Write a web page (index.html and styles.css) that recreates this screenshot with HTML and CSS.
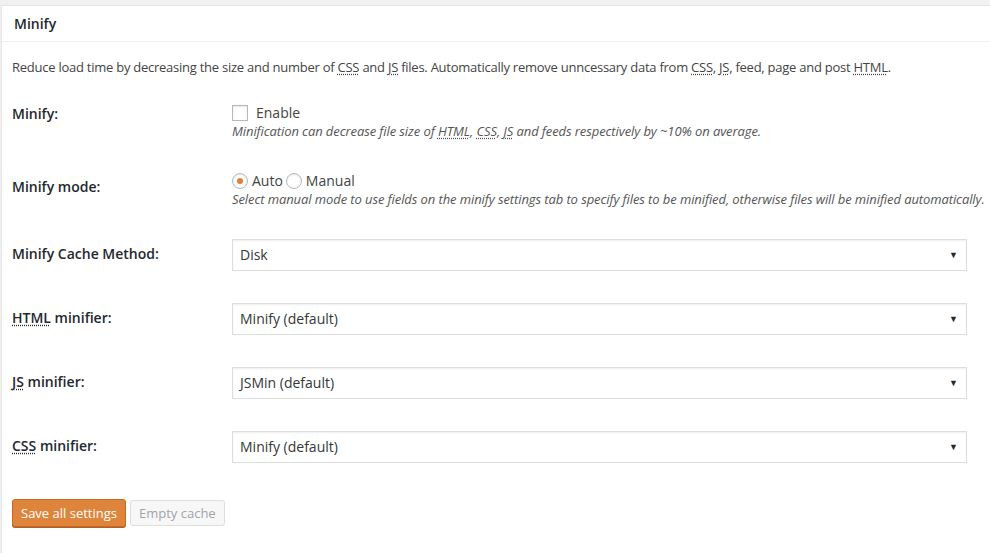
FILE: index.html
```html
<!DOCTYPE html>
<html>
<head>
<meta charset="utf-8">
<link rel="stylesheet" href="styles.css">
</head>
<body>
<div class="panel">
  <div class="panel-head">Minify</div>
  <div class="panel-body">
    <p class="intro">Reduce load time by decreasing the size and number of <abbr>CSS</abbr> and <abbr>JS</abbr> files. Automatically remove unncessary data from <abbr>CSS</abbr>, <abbr>JS</abbr>, feed, page and post <abbr>HTML</abbr>.</p>

    <div class="row row-enable">
      <div class="label">Minify:</div>
      <div class="field">
        <div class="line"><span class="checkbox"></span><span class="opt-text">Enable</span></div>
        <div class="desc">Minification can decrease file size of <abbr>HTML</abbr>, <abbr>CSS</abbr>, <abbr>JS</abbr> and feeds respectively by ~10% on average.</div>
      </div>
    </div>

    <div class="row row-mode">
      <div class="label label-low">Minify mode:</div>
      <div class="field">
        <div class="line"><span class="radio checked"></span><span class="radio-text">Auto</span><span class="radio"></span><span class="radio-text">Manual</span></div>
        <div class="desc">Select manual mode to use fields on the minify settings tab to specify files to be minified, otherwise files will be minified automatically.</div>
      </div>
    </div>

    <div class="row row-select">
      <div class="label label-sel">Minify Cache Method:</div>
      <div class="field"><div class="select"><span>Disk</span><span class="arrow">&#9660;</span></div></div>
    </div>

    <div class="row row-select">
      <div class="label label-sel"><abbr>HTML</abbr> minifier:</div>
      <div class="field"><div class="select"><span>Minify (default)</span><span class="arrow">&#9660;</span></div></div>
    </div>

    <div class="row row-select">
      <div class="label label-sel"><abbr>JS</abbr> minifier:</div>
      <div class="field"><div class="select"><span>JSMin (default)</span><span class="arrow">&#9660;</span></div></div>
    </div>

    <div class="row row-select">
      <div class="label label-sel"><abbr>CSS</abbr> minifier:</div>
      <div class="field"><div class="select"><span>Minify (default)</span><span class="arrow">&#9660;</span></div></div>
    </div>

    <div class="buttons">
      <button class="btn-primary">Save all settings</button>
      <button class="btn-disabled">Empty cache</button>
    </div>
  </div>
</div>
</body>
</html>
```

FILE: styles.css
```css
html, body {
  margin: 0;
  padding: 0;
  background: #f1f1f1;
  font-family: "Open Sans", "Noto Sans", sans-serif;
  font-size: 13px;
  color: #444;
  overflow: hidden;
}

.panel {
  margin-top: 5px;
  margin-left: 1px;
  width: 989px;
  height: 548px;
  box-sizing: border-box;
  background: #fff;
  border: 1px solid #e5e5e5;
  border-right: none;
  border-bottom: none;
  overflow: hidden;
}

.panel-head {
  height: 36px;
  line-height: 35px;
  padding-left: 12px;
  font-size: 14px;
  font-weight: 600;
  color: #23282d;
  border-bottom: 1px solid #eee;
  box-sizing: border-box;
}

.panel-body {
  padding-left: 10px;
}

abbr {
  text-decoration: underline dotted;
  text-underline-offset: 2px;
}

.intro {
  margin: 0;
  padding-top: 16px;
  line-height: 18px;
  letter-spacing: -0.25px;
  white-space: nowrap;
}

.row {
  display: flex;
  line-height: 18px;
}

.label {
  width: 220px;
  flex: none;
  font-size: 14px;
  font-weight: 600;
  color: #23282d;
}

.field {
  flex: none;
}

.row-enable { margin-top: 28px; }
.row-mode { margin-top: 32px; }
.row-select { margin-top: 32px; }
.row-mode + .row-select { margin-top: 31px; }

.label { padding-top: 1px; }
.label-low { padding-top: 6px; }
.label-sel { padding-top: 6px; }

.line {
  display: flex;
  align-items: center;
  height: 18px;
  font-size: 14px;
  color: #444;
}

.checkbox {
  width: 16px;
  height: 16px;
  box-sizing: border-box;
  border: 1px solid #b4b9be;
  background: #fff;
  box-shadow: inset 0 1px 2px rgba(0,0,0,0.1);
  margin-right: 8px;
}

.radio {
  width: 16px;
  height: 16px;
  box-sizing: border-box;
  border: 1px solid #b4b9be;
  border-radius: 50%;
  background: #fff;
  box-shadow: inset 0 1px 2px rgba(0,0,0,0.1);
  margin-right: 4px;
  position: relative;
}

.radio.checked::after {
  content: "";
  position: absolute;
  left: 4px;
  top: 4px;
  width: 6px;
  height: 6px;
  border-radius: 50%;
  background: #e07f32;
}

.radio-text { margin-right: 3px; }

.desc {
  font-style: italic;
  color: #555;
  letter-spacing: -0.09px;
  white-space: nowrap;
}

.select {
  width: 735px;
  height: 32px;
  box-sizing: border-box;
  border: 1px solid #ddd;
  box-shadow: inset 0 1px 2px rgba(0,0,0,0.07);
  background: #fff;
  display: flex;
  align-items: center;
  justify-content: space-between;
  padding: 0 8px 0 7px;
  font-size: 14px;
  color: #32373c;
}

.arrow {
  font-size: 9px;
  color: #23282d;
}

.buttons {
  display: flex;
  align-items: center;
  gap: 4px;
  margin-top: 36px;
}

button {
  font-family: inherit;
  font-size: 13px;
  cursor: pointer;
  border-radius: 3px;
  padding: 0 8px;
}

.btn-primary {
  height: 28px;
  background: #df843b;
  border: 1px solid #c4692a;
  color: #fff;
  box-shadow: 0 1px 0 #b55d22;
}

.btn-disabled {
  height: 26px;
  background: #f7f7f7;
  border: 1px solid #ddd;
  color: #a0a5aa;
  box-shadow: none;
}
```
